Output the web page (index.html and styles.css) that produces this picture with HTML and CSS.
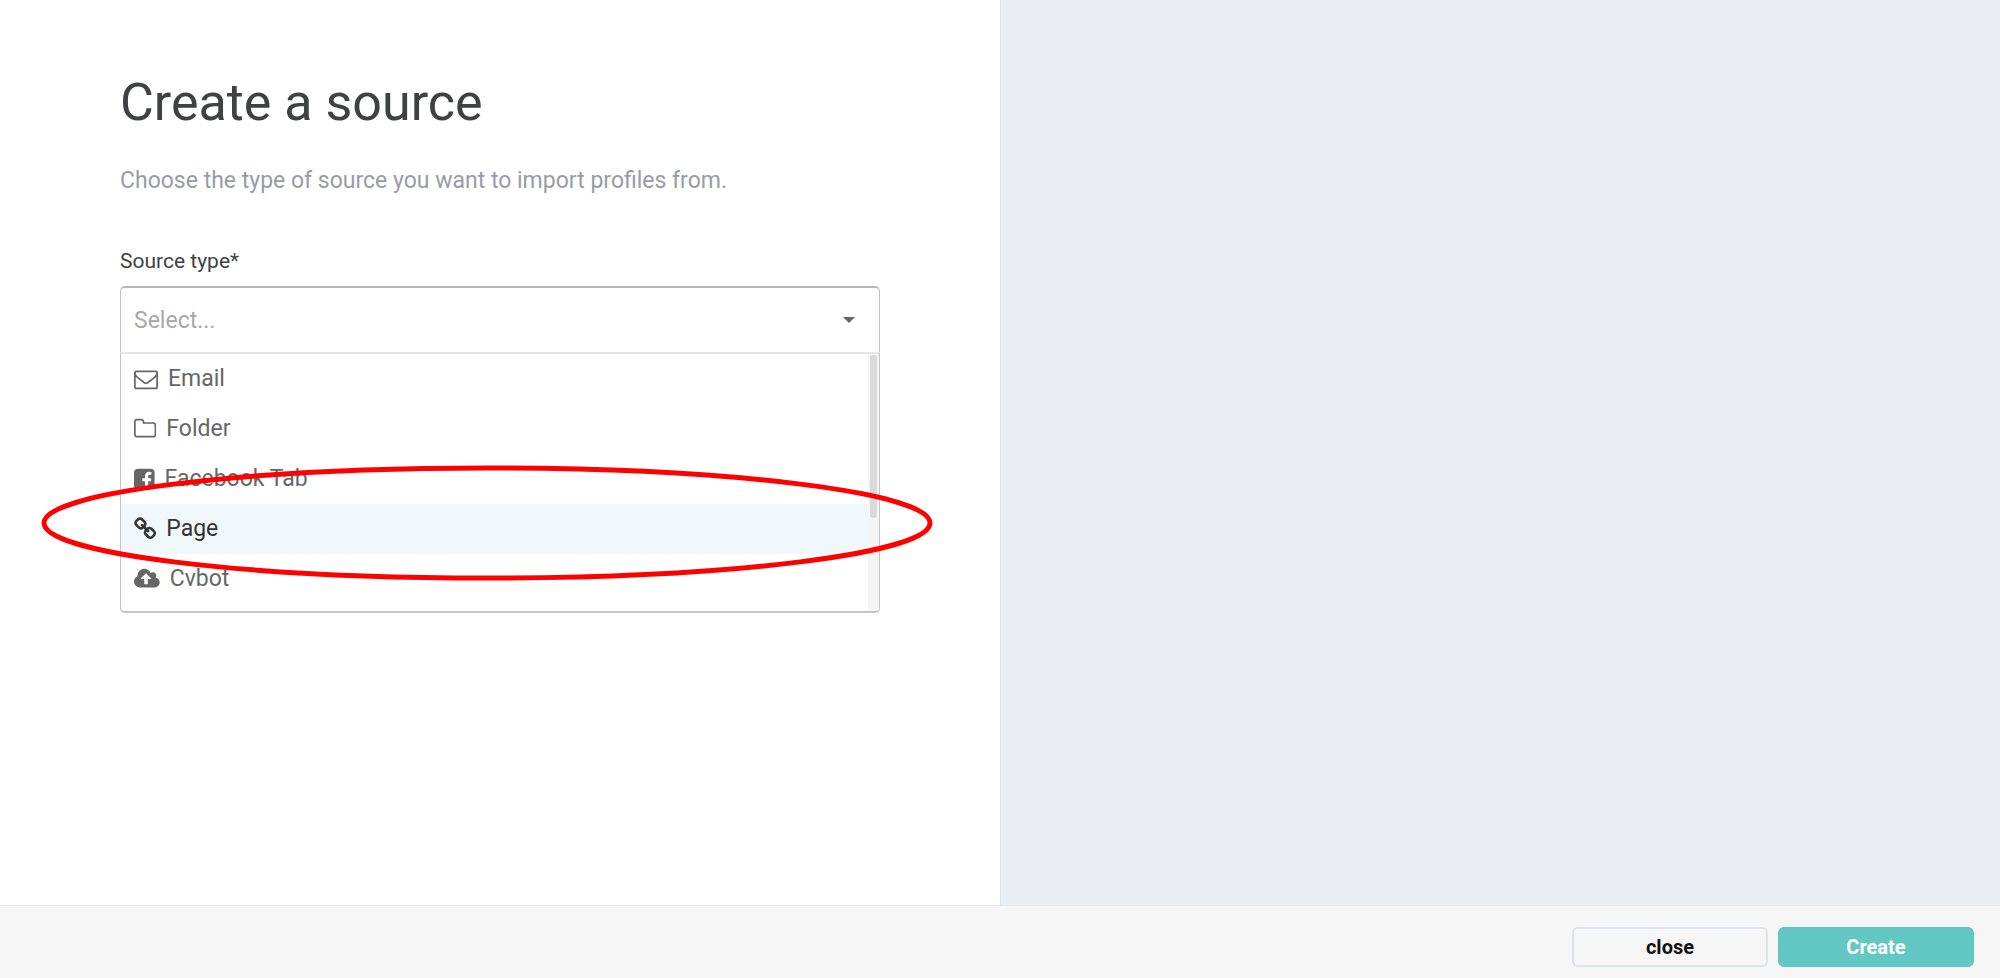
FILE: index.html
```html
<!DOCTYPE html>
<html lang="en">

<head>
    <meta charset="UTF-8">
    <meta name="viewport" content="width=device-width, initial-scale=1.0">
    <title>Create a source</title>
    <link rel="stylesheet" href="styles.css">
</head>

<body>
    <main class="main">
        <section class="form-panel">
            <h1 class="title">Create a source</h1>
            <p class="description">Choose the type of source you want to import profiles from.</p>

            <label class="label" for="source-type">Source type*</label>
            <div class="select-box">
                <select id="source-type" class="select">
                    <option value="">Select...</option>
                    <option>Email</option>
                    <option>Folder</option>
                    <option>Facebook Tab</option>
                    <option>Page</option>
                    <option>Cvbot</option>
                </select>
                <svg class="caret" viewBox="0 0 12 6"><path d="M0 0h12L6 6z"/></svg>
            </div>
            <div class="menu">
                <ul class="options" role="listbox" aria-label="Source type">
                    <li class="option" role="option">
                        <svg class="icon" viewBox="0 0 1792 1792"><path d="M1664 1504v-768q-32 36-69 66-268 206-426 338-51 43-83 67t-86.5 48.5-102.5 24.5h-2q-48 0-102.5-24.5t-86.5-48.5-83-67q-158-132-426-338-37-30-69-66v768q0 13 9.5 22.5t22.5 9.5h1472q13 0 22.5-9.5t9.5-22.5zm0-1051v-24.5l-.5-13-3-12.5-5.5-9-9-7.5-14-2.5h-1472q-13 0-22.5 9.5t-9.5 22.5q0 168 147 284 193 152 401 317 6 5 35 29.5t46 37.5 44.5 31.5 50.5 27.5 43 9h2q20 0 43-9t50.5-27.5 44.5-31.5 46-37.5 35-29.5q208-165 401-317 54-43 100.5-115.5t46.5-131.5zm128-37v1088q0 66-47 113t-113 47h-1472q-66 0-113-47t-47-113v-1088q0-66 47-113t113-47h1472q66 0 113 47t47 113z"/></svg>
                        <span>Email</span>
                    </li>
                    <li class="option" role="option">
                        <svg class="icon" viewBox="64 0 1664 1792"><path d="M1600 1312v-704q0-40-28-68t-68-28h-704q-40 0-68-28t-28-68v-64q0-40-28-68t-68-28h-320q-40 0-68 28t-28 68v960q0 40 28 68t68 28h1216q40 0 68-28t28-68zm128-704v704q0 92-66 158t-158 66h-1216q-92 0-158-66t-66-158v-960q0-92 66-158t158-66h320q92 0 158 66t66 158v32h672q92 0 158 66t66 158z"/></svg>
                        <span>Folder</span>
                    </li>
                    <li class="option" role="option">
                        <svg class="icon" viewBox="128 0 1536 1792"><path d="M1376 128q119 0 203.5 84.5t84.5 203.5v960q0 119-84.5 203.5t-203.5 84.5h-188v-595h199l30-232h-229v-148q0-56 23.5-84t91.5-28l122-1v-207q-63-9-178-9-136 0-217.5 80t-81.5 226v171h-200v232h200v595h-532q-119 0-203.5-84.5t-84.5-203.5v-960q0-119 84.5-203.5t203.5-84.5h960z"/></svg>
                        <span>Facebook Tab</span>
                    </li>
                    <li class="option option-active" role="option" aria-selected="true">
                        <svg class="icon" viewBox="64 0 1664 1792"><path d="M1520 1216q0-40-28-68l-208-208q-28-28-68-28-42 0-72 32 3 3 19 18.5t21.5 21.5 15 19 13 25.5 3.5 27.5q0 40-28 68t-68 28q-15 0-27.5-3.5t-25.5-13-19-15-21.5-21.5-18.5-19q-33 31-33 73 0 40 28 68l206 207q27 27 68 27 40 0 68-26l147-146q28-28 28-67zm-703-705q0-40-28-68l-206-207q-28-28-68-28-39 0-68 27l-147 146q-28 28-28 67 0 40 28 68l208 208q27 27 68 27 42 0 72-31-3-3-19-18.5t-21.5-21.5-15-19-13-25.5-3.5-27.5q0-40 28-68t68-28q15 0 27.5 3.5t25.5 13 19 15 21.5 21.5 18.5 19q33-31 33-73zm895 705q0 120-85 203l-147 146q-83 83-203 83-121 0-204-85l-206-207q-83-83-83-203 0-123 88-209l-88-88q-86 88-208 88-120 0-204-84l-208-208q-84-84-84-204t85-203l147-146q83-83 203-83 121 0 204 85l206 207q83 83 83 203 0 123-88 209l88 88q86-88 208-88 120 0 204 84l208 208q84 84 84 204z"/></svg>
                        <span>Page</span>
                    </li>
                    <li class="option" role="option">
                        <svg class="icon" viewBox="0 0 1920 1792"><path d="M1280 864q0-14-9-23l-352-352q-9-9-23-9t-23 9l-351 351q-10 12-10 24 0 14 9 23t23 9h224v352q0 13 9.5 22.5t22.5 9.5h192q13 0 22.5-9.5t9.5-22.5v-352h224q13 0 22.5-9.5t9.5-22.5zm640 288q0 159-112.5 271.5t-271.5 112.5h-1088q-185 0-316.5-131.5t-131.5-316.5q0-130 70-240t188-165q-2-30-2-43 0-212 150-362t362-150q156 0 285.5 87t188.5 231q71-62 166-62 106 0 181 75t75 181q0 76-41 138 130 31 213.5 135.5t83.5 238.5z"/></svg>
                        <span>Cvbot</span>
                    </li>
                </ul>
                <div class="scrollbar"><div class="scroll-thumb"></div></div>
            </div>

            <svg class="highlight" viewBox="0 0 892 116"><ellipse cx="446" cy="58" rx="443" ry="55"/></svg>
        </section>
        <aside class="preview"></aside>
    </main>

    <footer class="footer">
        <button class="btn" type="button">close</button>
        <button class="btn btn-main" type="button">Create</button>
    </footer>
</body>

</html>
```
FILE: styles.css
```css
* {
    box-sizing: border-box;
}

:root {
    --color-text: #3f4142;
    --color-option: #666;
    --color-border: #c4c4c4;
    --color-line: #dbe3eb;
    --color-main: #63c7c4;
}

body {
    display: flex;
    flex-direction: column;
    min-height: 100vh;
    margin: 0;
    background-color: #fff;
    color: var(--color-text);
    font-family: Roboto, Arial, sans-serif;
}

.main {
    display: grid;
    flex: 1;
    grid-template-columns: 1fr 1fr;
}

.form-panel {
    position: relative;
    padding: 71px 12%;
}

.preview {
    background-color: #eaedf2;
    border-left: 1px solid var(--color-line);
}

.title {
    margin: 0;
    font-size: 52px;
    font-weight: 400;
    line-height: 64px;
}

.description {
    margin: 30px 0 0;
    color: #989ca6;
    font-size: 23px;
    line-height: 32px;
}

.label {
    display: block;
    margin: 51px 0 12px;
    font-size: 21px;
    line-height: 26px;
}

.select-box {
    display: grid;
    align-items: center;
    height: 66px;
    border: 1px solid var(--color-border);
    border-top: 2px solid #b8b8b8;
    border-bottom: 0;
    border-radius: 5px 5px 0 0;
}

.select {
    grid-area: 1 / 1;
    width: 100%;
    height: 100%;
    padding: 0 13px;
    appearance: none;
    background: none;
    border: 0;
    outline: 0;
    color: #a8a8a8;
    font-family: inherit;
    font-size: 23px;
}

.caret {
    grid-area: 1 / 1;
    justify-self: end;
    width: 12px;
    height: 6px;
    margin-right: 24px;
    fill: var(--color-option);
    pointer-events: none;
}

.menu {
    display: flex;
    height: 261px;
    border: 1px solid var(--color-border);
    border-top: 2px solid #e6e6e6;
    border-bottom-width: 2px;
    border-radius: 0 0 5px 5px;
    overflow: hidden;
}

.options {
    flex: 1;
    margin: 0;
    padding: 0;
    list-style: none;
}

.option {
    display: flex;
    align-items: center;
    gap: 10px;
    height: 50px;
    padding: 0 13px;
    color: var(--color-option);
    font-size: 23px;
    line-height: 32px;
}

.option-active {
    background-color: #f0f8fb;
    color: #333;
}

.icon {
    height: 24px;
    fill: currentColor;
}

.scrollbar {
    width: 11px;
    padding: 1px 2px;
    background-color: #f5f5f5;
}

.scroll-thumb {
    height: 163px;
    background-color: #d8d8dd;
    border-radius: 3px;
}

/* red marker around the page option */
.highlight {
    position: absolute;
    top: 465px;
    left: 41px;
    width: 892px;
    height: 116px;
    pointer-events: none;
}

.highlight ellipse {
    fill: none;
    stroke: #f00;
    stroke-width: 5;
}

.footer {
    display: flex;
    justify-content: flex-end;
    gap: 10px;
    padding: 21px 26px 11px;
    background-color: #f6f6f6;
    border-top: 1px solid #e6e8ea;
}

.btn {
    width: 196px;
    height: 40px;
    padding: 0;
    background-color: transparent;
    border: 2px solid var(--color-line);
    border-radius: 6px;
    color: #111;
    font-family: inherit;
    font-size: 20px;
    font-weight: 700;
}

.btn-main {
    background-color: var(--color-main);
    border-color: var(--color-main);
    color: #fff;
}
```
